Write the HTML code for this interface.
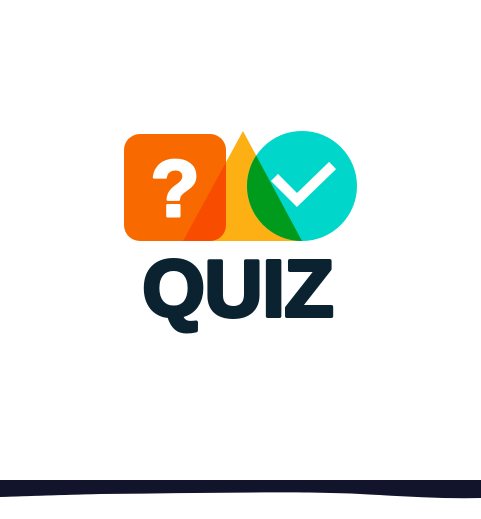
<!DOCTYPE html>
<html><head><style>
html,body{margin:0;padding:0;background:#fff;width:481px;height:519px;overflow:hidden}
svg{position:absolute;left:0;top:0}
</style></head><body>
<svg width="481" height="519" viewBox="0 0 481 519">
<defs>
<clipPath id="tri"><polygon points="243,131 302,241 183,241"/></clipPath>
</defs>
<polygon points="243,131 302,241 183,241" fill="#fdb013"/>
<rect x="124" y="134" width="102" height="107" rx="16" fill="#f86a00"/>
<circle cx="302" cy="186" r="55" fill="#00d6c9"/>
<g clip-path="url(#tri)">
<rect x="124" y="134" width="102" height="107" rx="16" fill="#f84d00"/>
<circle cx="302" cy="186" r="55" fill="#009b1d"/>
</g>
<text x="175" y="216" font-family="Liberation Sans, sans-serif" font-weight="bold" font-size="80" fill="#fff" stroke="#fff" stroke-width="3" stroke-linejoin="round" text-anchor="middle">?</text>
<polyline points="278,181 297,200 329,169" fill="none" stroke="#fff" stroke-width="10" stroke-linecap="square"/>
<text x="238" y="316" font-family="Liberation Sans, sans-serif" font-weight="bold" font-size="80" fill="#0b2230" stroke="#0b2230" stroke-width="4" stroke-linejoin="round" text-anchor="middle">QUIZ</text>
<path d="M0,480 H481 V498 C440,499 400,496 360,494 C300,491 200,493 100,494 C60,495 30,496 0,497 Z" fill="#11142a"/>
</svg>
</body></html>
